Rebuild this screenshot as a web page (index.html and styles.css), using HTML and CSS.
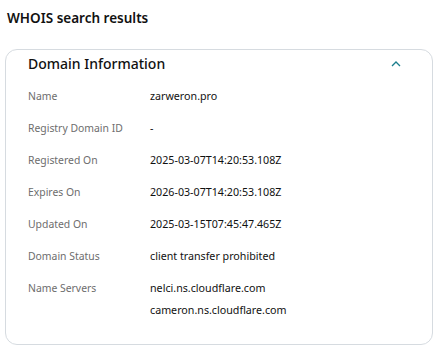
FILE: index.html
```html
<!DOCTYPE html>
<html lang="en">
<head>
    <meta charset="UTF-8">
    <meta name="viewport" content="width=device-width, initial-scale=1.0">
    <title>WHOIS search results</title>
    <link rel="stylesheet" href="styles.css">
</head>
<body>
    <h2 class="page-title">WHOIS search results</h2>

    <section class="card">
        <div class="card-head">
            <h3 class="card-title">Domain Information</h3>
            <svg class="chevron" viewBox="0 0 10 6" fill="none" stroke="currentColor" stroke-width="1.3"><path d="M1 5 5 1l4 4"/></svg>
        </div>
        <dl class="info">
            <div class="row"><dt>Name</dt><dd>zarweron.pro</dd></div>
            <div class="row"><dt>Registry Domain ID</dt><dd>-</dd></div>
            <div class="row"><dt>Registered On</dt><dd>2025-03-07T14:20:53.108Z</dd></div>
            <div class="row"><dt>Expires On</dt><dd>2026-03-07T14:20:53.108Z</dd></div>
            <div class="row"><dt>Updated On</dt><dd>2025-03-15T07:45:47.465Z</dd></div>
            <div class="row"><dt>Domain Status</dt><dd>client transfer prohibited</dd></div>
            <div class="row"><dt>Name Servers</dt><dd><span>nelci.ns.cloudflare.com</span><span>cameron.ns.cloudflare.com</span></dd></div>
        </dl>
    </section>
</body>
</html>
```

FILE: styles.css
```css
/* --- Global Setup --- */
body, html {
    margin: 0;
    padding: 0;
    background-color: #fff;
    font-family: 'Noto Sans', sans-serif;
    color: #111;
}

body {
    padding: 8px 8px 0 5px;
}

.page-title {
    margin: 0 0 0 2px;
    font-size: 13.5px;
    font-weight: 600;
    line-height: 20px;
    color: #111;
}

/* --- Card --- */
.card {
    margin-top: 21px;
    width: 428px;
    box-sizing: border-box;
    border: 1px solid #d6dbe0;
    border-radius: 12px;
    padding: 0 0 26px 22px;
}

.card-head {
    display: flex;
    align-items: center;
    justify-content: space-between;
    height: 27px;
    padding-right: 31px;
}
.card-title {
    margin: 0;
    font-size: 14px;
    font-weight: 500;
    color: #111;
}
.chevron { width: 10px; height: 6px; color: #1b7d8c; }

.info { margin: 11px 0 0 0; }
.row { display: flex; min-height: 32px; font-size: 10.7px; line-height: 16px; }
.row dt { width: 122px; color: #6d6d6d; font-size: 10.4px; }
.row dd { margin: 0; color: #111; display: flex; flex-direction: column; gap: 6px; }
```
